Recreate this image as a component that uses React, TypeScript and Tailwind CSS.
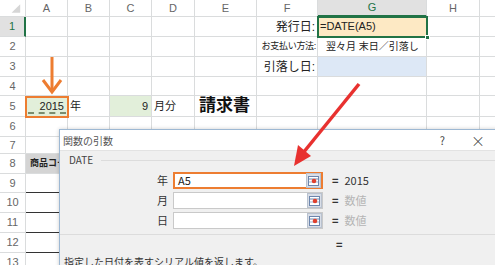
import React from "react"

const cols = [26, 42, 42, 42, 43, 62, 61, 109, 53, 20]
const letters = ["", "A", "B", "C", "D", "E", "F", "G", "H", ""]
const rowHeights = [20, 20, 20, 19, 21, 20, 17, 20, 19, 20, 20, 20, 20]

const font = { fontFamily: "'Liberation Sans', 'Noto Sans CJK JP', sans-serif" }

const Cell = ({ w, className = "", children }: { w: number; className?: string; children?: React.ReactNode }) => (
    <div
        className={`shrink-0 border-r border-b border-[#dadcdd] flex items-center overflow-hidden whitespace-nowrap ${className}`}
        style={{ width: w }}
    >
        {children}
    </div>
)

const RefButton = () => (
    <div className="w-[15px] h-[15px] bg-[#d9dee7] border border-[#b9c2cf] flex items-center justify-center">
        <svg width="11" height="10" viewBox="0 0 11 10">
            <rect x="0.5" y="0.5" width="10" height="9" fill="#fff" stroke="#6d86ad" />
            <line x1="1" y1="3" x2="10" y2="3" stroke="#6d86ad" />
            <line x1="1" y1="6" x2="10" y2="6" stroke="#9fb2cf" />
            <circle cx="6" cy="5" r="2.3" fill="#e0412f" />
        </svg>
    </div>
)

const ArgRow = ({ label, value, active, result }: { label: string; value: string; active?: boolean; result: string }) => (
    <div className="flex items-center h-[17px] mb-[3px]">
        <div className="w-[113px] text-right pr-[5px] text-[11px] text-[#333]">{label}</div>
        <div
            className={`w-[150px] h-[17px] bg-white flex items-center justify-between ${active ? "border-2 border-[#ed7d31]" : "border border-[#c9c9c9]"}`}
        >
            <span className="pl-[3px] text-[11px] text-[#222]">{value}</span>
            <RefButton />
        </div>
        <span className="ml-[9px] text-[11px] text-[#333] font-bold">=</span>
        <span className={`ml-[6px] text-[11px] ${result === "2015" ? "text-[#333]" : "text-[#b5b5b5]"}`}>{result}</span>
    </div>
)

export default function App() {
    const rowLabel = (i: number) => (
        <Cell w={cols[0]} className={`justify-center text-[11px] ${i === 1 ? "bg-[#e1e1e1] text-[#217346] border-r-2 border-r-[#217346]" : "bg-white text-[#666]"}`}>
            {i}
        </Cell>
    )

    const rows: React.ReactNode[] = []
    for (let i = 1; i <= 13; i++) {
        const c: React.ReactNode[] = []
        for (let j = 1; j < cols.length; j++) {
            let cls = "bg-white"
            let content: React.ReactNode = null
            if (i === 1 && j === 6) { cls = "justify-end pr-[2px] text-[12px] text-[#222]"; content = "発行日:" }
            if (i === 2 && j === 6) { cls = "justify-end pr-[1px] text-[9px] tracking-[-0.3px] text-[#222]"; content = "お支払い方法:" }
            if (i === 3 && j === 6) { cls = "justify-end pr-[2px] text-[12px] text-[#222]"; content = "引落し日:" }
            if (i === 1 && j === 7) { cls = "bg-[#fde9c4] text-[11px] text-[#222] pl-[2px]"; content = "=DATE(A5)" }
            if (i === 2 && j === 7) { cls = "text-[10px] text-[#222] pl-[8px]"; content = "翌々月 末日／引落し" }
            if (i === 3 && j === 7) { cls = "bg-[#dde8f6]" }
            if (i === 5 && j === 1) { cls = "bg-[#e2efda] justify-end pr-[3px] text-[11px] text-[#222]"; content = "2015" }
            if (i === 5 && j === 2) { cls = "pl-[2px] text-[11px] text-[#222]"; content = "年" }
            if (i === 5 && j === 3) { cls = "bg-[#e2efda] justify-end pr-[3px] text-[11px] text-[#222]"; content = "9" }
            if (i === 5 && j === 4) { cls = "pl-[2px] text-[11px] text-[#222]"; content = "月分" }
            if (i === 5 && j === 5) { cls = "pl-[4px] text-[17px] font-bold text-[#111] overflow-visible"; content = "請求書" }
            if (i === 8 && j === 1) { cls = "bg-[#d4d4d4] pl-[4px] text-[9px] font-bold text-[#222]"; content = "商品コー" }
            if (i >= 9 && j === 1) { cls = "bg-white border-b-[#333]" }
            c.push(<Cell key={j} w={cols[j]} className={cls}>{content}</Cell>)
        }
        rows.push(
            <div key={i} className="flex" style={{ height: rowHeights[i - 1] }}>
                {rowLabel(i)}
                {c}
            </div>
        )
    }

    return (
        <div className="relative w-[495px] h-[265px] overflow-hidden bg-white" style={font}>
            <div className="flex h-[17px]">
                {cols.map((w, j) => (
                    <Cell
                        key={j}
                        w={w}
                        className={`justify-center text-[11px] ${j === 7 ? "bg-[#e1e1e1] text-[#217346] border-b-2 border-b-[#217346]" : "bg-white text-[#666]"}`}
                    >
                        {j === 0 ? (
                            <svg width="26" height="17" viewBox="0 0 26 17"><polygon points="21,4 21,13 12,13" fill="#d6d6d6" /></svg>
                        ) : letters[j]}
                    </Cell>
                ))}
            </div>
            {rows}

            {/* selected cell G1 */}
            <div className="absolute left-[317px] top-[16px] w-[111px] h-[22px] border-2 border-[#217346]" />
            <div className="absolute left-[425px] top-[35px] w-[5px] h-[5px] bg-[#217346] border border-white" />

            {/* A5 highlight */}
            <div className="absolute left-[25px] top-[96px] w-[44px] h-[22px] border-2 border-[#ed7d31]" />
            <div className="absolute left-[28px] top-[112px] w-[38px] border-t-2 border-dashed border-[#7a8d6e]" />

            {/* orange arrow */}
            <svg className="absolute left-[40px] top-[56px]" width="26" height="40" viewBox="0 0 26 40">
                <line x1="12" y1="1" x2="12" y2="36" stroke="#ed7d31" strokeWidth="3" />
                <polyline points="3,24 12,36 21,24" fill="none" stroke="#ed7d31" strokeWidth="3" />
            </svg>

            {/* dialog */}
            <div className="absolute left-[59px] top-[129px] w-[450px] h-[160px] bg-[#f0f0f0] border border-[#9db8d3] shadow-[0_0_4px_rgba(0,0,0,0.2)]" style={{ fontFamily: "'Noto Sans CJK JP', 'Liberation Sans', sans-serif" }}>
                <div className="h-[21px] bg-white border-b border-[#e3e3e3] flex items-center pl-[3px] text-[10px] text-[#555]">
                    <span>関数の引数</span>
                    <span className="ml-auto text-[11px] text-[#444] mr-[26px]">?</span>
                    <span className="text-[14px] font-light text-[#333] mr-[23px]">×</span>
                </div>
                <div className="relative h-[10px]">
                    <div className="absolute left-[41px] right-0 top-[9px] border-t border-[#dcdcdc]" />
                    <span className="absolute left-[9px] top-[1px] text-[10px] text-[#444]">DATE</span>
                </div>
                <div className="pt-[11px] pb-[2px] border-b border-[#dcdcdc]">
                    <ArgRow label="年" value="A5" active result="2015" />
                    <ArgRow label="月" value="" result="数値" />
                    <ArgRow label="日" value="" result="数値" />
                </div>
                <div className="h-[19px] flex items-center pl-[276px] text-[11px] font-bold text-[#333]">=</div>
                <div className="pl-[4px] text-[10px] text-[#333]">指定した日付を表すシリアル値を返します。</div>
            </div>

            {/* red arrow */}
            <svg className="absolute left-0 top-0 pointer-events-none" width="495" height="265" viewBox="0 0 495 265">
                <line x1="359" y1="84" x2="303" y2="153" stroke="#e8312f" strokeWidth="3.5" />
                <polygon points="294,166 298,145 311,156" fill="#e8312f" />
            </svg>
        </div>
    )
}
